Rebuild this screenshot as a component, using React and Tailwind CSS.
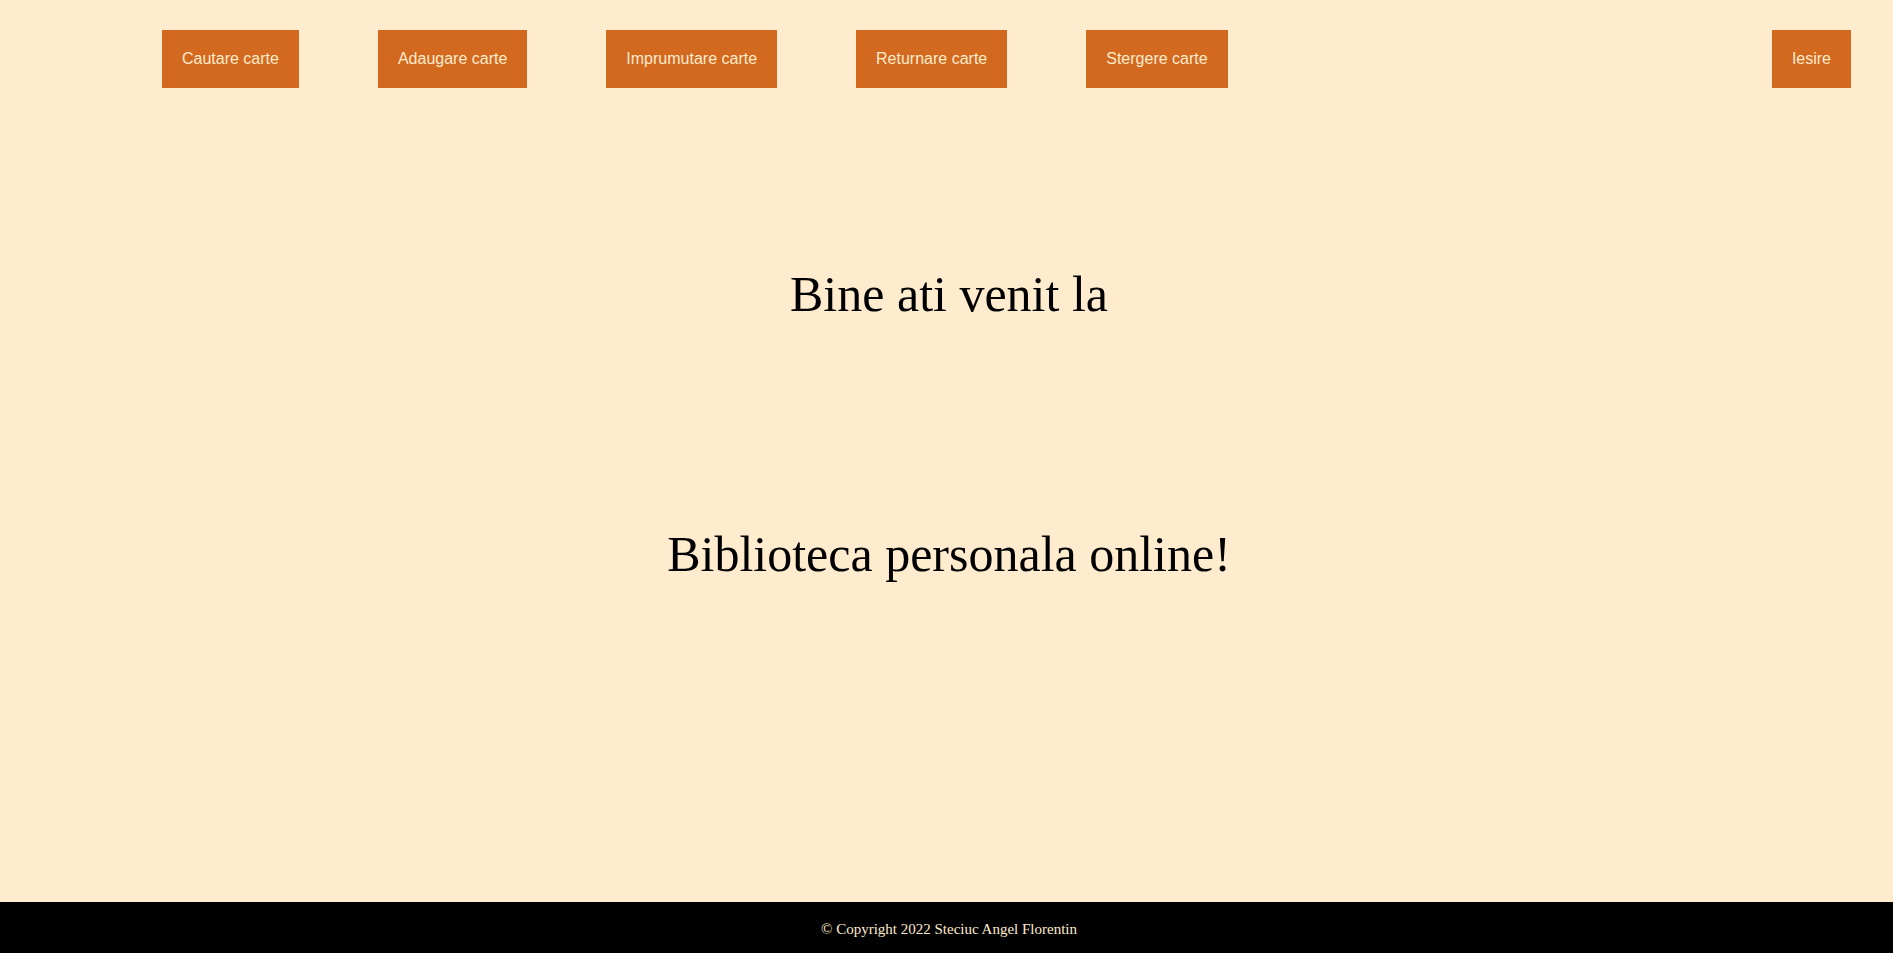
import React from "react";

const links = ["Cautare carte", "Adaugare carte", "Imprumutare carte", "Returnare carte", "Stergere carte"];

const App = () => {
    return (
        <div className="min-h-screen flex flex-col bg-[#ffebcd]">
            {/* Meniu */}
            <nav className="flex items-start pt-[30px] pl-[162px] pr-[42px]" style={{ fontFamily: '"Liberation Sans", Arial, sans-serif' }}>
                <div className="flex gap-[79px]">
                    {links.map((label) => (
                        <a key={label} href="#" className="block bg-[#d2691e] text-[#ffebcd] text-[16px] leading-[18px] p-[20px]">
                            {label}
                        </a>
                    ))}
                </div>
                <a href="#" className="block ml-auto bg-[#d2691e] text-[#ffebcd] text-[16px] leading-[18px] p-[20px]">
                    Iesire
                </a>
            </nav>

            <main className="flex flex-col items-center pl-[5px] text-black text-[50px] leading-[57px]" style={{ fontFamily: '"Liberation Serif", "Times New Roman", serif' }}>
                <h1 className="mt-[178px]">Bine ati venit la</h1>
                <h1 className="mt-[203px]">Biblioteca personala online!</h1>
            </main>

            <footer className="mt-auto h-[51px] flex items-center justify-center pl-[5px] pt-[4px] bg-black text-[#ffebcd] text-[15px]" style={{ fontFamily: '"Liberation Serif", "Times New Roman", serif' }}>
                © Copyright 2022 Steciuc Angel Florentin
            </footer>
        </div>
    );
};

export default App;
